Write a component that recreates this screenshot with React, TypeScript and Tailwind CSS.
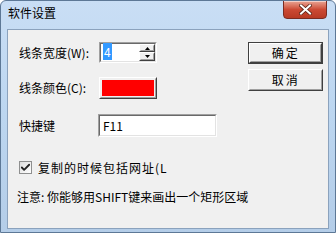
import { Check } from "lucide-react";

const font = { fontFamily: '"Noto Sans CJK SC", "Liberation Sans", sans-serif' };

function Sunken({ className, children }: { className: string; children?: React.ReactNode }) {
  return (
    <div className={`border border-t-[#a0a0a0] border-l-[#a0a0a0] border-b-white border-r-white ${className}`}>
      <div className="h-full w-full border border-t-[#696969] border-l-[#696969] border-b-[#e3e3e3] border-r-[#e3e3e3] bg-white">
        {children}
      </div>
    </div>
  );
}

function Raised({ className, children, dark }: { className: string; children?: React.ReactNode; dark?: boolean }) {
  return (
    <div className={`${dark ? "border border-[#404040]" : ""} ${className}`}>
      <div className="h-full w-full border border-t-white border-l-white border-b-[#404040] border-r-[#404040]">
        <div className="h-full w-full border border-t-[#f0f0f0] border-l-[#f0f0f0] border-b-[#a0a0a0] border-r-[#a0a0a0] bg-[#f0f0f0] flex items-center justify-center">
          {children}
        </div>
      </div>
    </div>
  );
}

export default function App() {
  return (
    <div
      className="w-[336px] h-[233px] rounded-t-[6px] border border-[#5d7896] bg-gradient-to-b from-[#c9def5] via-[#bcd6f0] to-[#b4cde8] text-[12px] text-black leading-none overflow-hidden"
      style={font}
    >
      <div className="flex h-[28px] items-start justify-between">
        <span className="pl-[7px] pt-[6px] text-[12px] text-black">软件设置</span>
        <div className="mr-[8px] mt-[-1px] flex h-[19px] w-[44px] items-center justify-center rounded-b-[4px] border border-[#7a2c22] bg-gradient-to-b from-[#e8a494] via-[#cc4a34] to-[#b83a24] shadow-[inset_0_1px_0_rgba(255,255,255,0.5)]">
          <svg width="13" height="11" viewBox="0 0 13 11">
            <path d="M2 1.5 L11 9.5 M11 1.5 L2 9.5" stroke="#5a2418" strokeWidth="3.6" strokeLinecap="square" />
            <path d="M2 1.5 L11 9.5 M11 1.5 L2 9.5" stroke="#ffffff" strokeWidth="2" strokeLinecap="square" />
          </svg>
        </div>
      </div>
      <div className="mx-[6px] h-[200px] border border-[#8ba2bd] bg-[#f0f0f0] flex">
        <div className="flex flex-1 flex-col pl-[11px] pt-[12px] whitespace-nowrap">
          <div className="flex h-[21px] items-center">
            <span className="w-[80px]">线条宽度(W):</span>
            <Sunken className="h-[21px] w-[58px]">
              <div className="flex h-full">
                <div className="flex-1 pl-[2px] pt-[2px]">
                  <span className="bg-[#3399ff] text-white px-[1px]">4</span>
                </div>
                <div className="flex w-[16px] flex-col">
                  <Raised className="h-[9px] w-[16px]">
                    <svg width="5" height="3" viewBox="0 0 5 3"><path d="M2.5 0 L5 3 L0 3 Z" fill="#000" /></svg>
                  </Raised>
                  <Raised className="h-[10px] w-[16px]">
                    <svg width="5" height="3" viewBox="0 0 5 3"><path d="M0 0 L5 0 L2.5 3 Z" fill="#000" /></svg>
                  </Raised>
                </div>
              </div>
            </Sunken>
          </div>
          <div className="mt-[14px] flex h-[22px] items-center">
            <span className="w-[80px]">线条颜色(C):</span>
            <Raised className="h-[22px] w-[58px]">
              <div className="h-[16px] w-[52px] bg-[#ff0000]" />
            </Raised>
          </div>
          <div className="mt-[15px] flex h-[23px] items-center">
            <span className="w-[79px]">快捷键</span>
            <Sunken className="h-[23px] w-[119px]">
              <div className="pl-[3px] pt-[4px]">F11</div>
            </Sunken>
          </div>
          <div className="mt-[24px] flex h-[13px] items-center">
            <div className="flex h-[13px] w-[13px] items-center justify-center border border-[#8e8f8f] bg-gradient-to-br from-[#dcdcdc] to-white">
              <Check size={11} strokeWidth={4} color="#222" />
            </div>
            <span className="ml-[6px] tracking-[1px]">复制的时候包括网址(L</span>
          </div>
          <div className="mt-[17px] -ml-[2px]">注意: 你能够用SHIFT键来画出一个矩形区域</div>
        </div>
        <div className="mr-[11px] flex shrink-0 flex-col pt-[12px]">
          <Raised dark className="h-[22px] w-[75px]">
            <span className="tracking-[2px]">确定</span>
          </Raised>
          <Raised className="mt-[5px] h-[22px] w-[75px]">
            <span className="tracking-[2px]">取消</span>
          </Raised>
        </div>
      </div>
    </div>
  );
}
